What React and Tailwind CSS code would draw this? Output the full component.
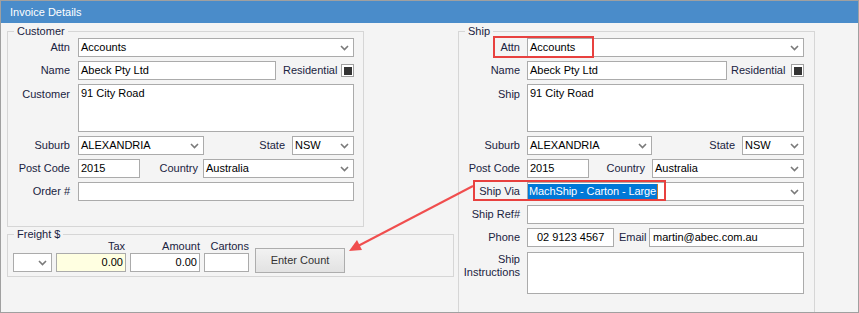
import React from "react"

const font = { fontFamily: '"Liberation Sans", Arial, sans-serif' }

function Chevron() {
  return (
    <svg width="9" height="6" viewBox="0 0 9 6" className="shrink-0">
      <path d="M1 1 L4.5 4.5 L8 1" stroke="#7a7a7a" strokeWidth="1.6" fill="none" />
    </svg>
  )
}

function Select({ className = "", children }) {
  return (
    <div className={"h-[19px] border border-[#ababab] bg-white flex items-center justify-between pl-[2px] pr-[4px] text-black " + className}>
      <span className="whitespace-nowrap">{children}</span>
      <Chevron />
    </div>
  )
}

function Input({ className = "", bg = "bg-white", children }) {
  return (
    <div className={"h-[19px] border border-[#ababab] flex items-center pl-[2px] text-black whitespace-nowrap " + bg + " " + className}>
      {children}
    </div>
  )
}

function Area({ className = "", children }) {
  return (
    <div className={"border border-[#ababab] bg-white pl-[2px] pt-[1px] text-black leading-[14px] " + className}>
      {children}
    </div>
  )
}

function Label({ children, className = "w-[62px]" }) {
  return <div className={"text-right text-[#1a2341] shrink-0 whitespace-nowrap " + className}>{children}</div>
}

function Row({ label, lw = "w-[62px]", gap = "ml-[8px]", children }) {
  return (
    <div className="flex items-center h-[19px]">
      <Label className={lw}>{label}</Label>
      <div className={gap + " flex items-center flex-1 min-w-0 h-full"}>{children}</div>
    </div>
  )
}

function Check() {
  return (
    <div className="w-[13px] h-[13px] border border-[#a0a0a0] bg-white flex items-center justify-center shrink-0">
      <div className="w-[8px] h-[8px] bg-[#333333]" />
    </div>
  )
}

function Group({ title, className = "", children }) {
  return (
    <fieldset className={"border border-[#d6d6d6] " + className}>
      <legend className="ml-[6px] px-[3px] leading-[13px] text-[#1a2341]">{title}</legend>
      {children}
    </fieldset>
  )
}

export default function App() {
  const sl = "w-[61px]"
  const sg = "ml-[7px]"
  return (
    <div className="relative w-[859px] h-[313px] text-[11px]" style={font}>
      <div className="w-full h-full border border-[#a0a0a0] bg-[#f4f4f4] overflow-hidden">
        <div className="h-[22px] bg-[#4a8cca] text-white flex items-center pl-[9px] leading-none">Invoice Details</div>

        <div className="flex items-start pl-[6px] pt-[2px]">
          <div className="w-[447px] shrink-0">
            <Group title="Customer" className="w-[357px] h-[202px] pr-[9px]">
              <div className="flex flex-col gap-[4px]">
                <Row label="Attn"><Select className="flex-1">Accounts</Select></Row>
                <Row label="Name">
                  <Input className="w-[198px]">Abeck Pty Ltd</Input>
                  <span className="ml-[7px] text-[#1a2341]">Residential</span>
                  <div className="ml-auto"><Check /></div>
                </Row>
                <div className="flex items-start h-[48px]">
                  <Label className="w-[62px] pt-[2px]">Customer</Label>
                  <Area className="ml-[8px] flex-1 h-[48px]">91 City Road</Area>
                </div>
                <Row label="Suburb">
                  <Select className="w-[126px]">ALEXANDRIA</Select>
                  <span className="ml-auto mr-[7px] text-[#1a2341]">State</span>
                  <Select className="w-[62px]">NSW</Select>
                </Row>
                <Row label="Post Code">
                  <Input className="w-[62px]">2015</Input>
                  <span className="ml-auto mr-[5px] text-[#1a2341]">Country</span>
                  <Select className="w-[151px]">Australia</Select>
                </Row>
                <Row label="Order #"><Input className="flex-1" /></Row>
              </div>
            </Group>

            <Group title="Freight $" className="w-[447px] h-[49px] mt-[1px]">
              <div className="flex items-end pl-[5px] -mt-[1px]">
                <Select className="w-[39px]" />
                <div className="ml-[4px] w-[70px] flex flex-col">
                  <span className="text-right text-[#1a2341] leading-[12px] mb-[1px] pr-[1px]">Tax</span>
                  <Input bg="bg-[#ffffe1]" className="justify-end pr-[2px]">0.00</Input>
                </div>
                <div className="ml-[4px] w-[70px] flex flex-col">
                  <span className="text-right text-[#1a2341] leading-[12px] mb-[1px]">Amount</span>
                  <Input className="justify-end pr-[2px]">0.00</Input>
                </div>
                <div className="ml-[4px] w-[45px] flex flex-col">
                  <span className="text-right text-[#1a2341] leading-[12px] mb-[1px]">Cartons</span>
                  <Input />
                </div>
                <button className="ml-[6px] mb-[-1px] w-[90px] h-[25px] border border-[#adadad] bg-gradient-to-b from-[#f2f2f2] to-[#e2e2e2] text-[#333333] text-[11px]">
                  Enter Count
                </button>
              </div>
            </Group>
          </div>

          <Group title="Ship" className="ml-[4px] w-[357px] h-[300px] pr-[10px] shrink-0">
            <div className="flex flex-col gap-[4px]">
              <Row label="Attn" lw={sl} gap={sg}><Select className="flex-1">Accounts</Select></Row>
              <Row label="Name" lw={sl} gap={sg}>
                <Input className="w-[200px]">Abeck Pty Ltd</Input>
                <span className="ml-[4px] text-[#1a2341]">Residential</span>
                <div className="ml-auto"><Check /></div>
              </Row>
              <div className="flex items-start h-[48px]">
                <Label className="w-[61px] pt-[2px]">Ship</Label>
                <Area className="ml-[7px] flex-1 h-[48px]">91 City Road</Area>
              </div>
              <Row label="Suburb" lw={sl} gap={sg}>
                <Select className="w-[125px]">ALEXANDRIA</Select>
                <span className="ml-auto mr-[7px] text-[#1a2341]">State</span>
                <Select className="w-[62px]">NSW</Select>
              </Row>
              <Row label="Post Code" lw={sl} gap={sg}>
                <Input className="w-[62px]">2015</Input>
                <span className="ml-auto mr-[7px] text-[#1a2341]">Country</span>
                <Select className="w-[152px]">Australia</Select>
              </Row>
              <Row label="Ship Via" lw={sl} gap={sg}>
                <div className="flex-1 h-[19px] border border-[#ababab] bg-white flex items-center justify-between pr-[4px]">
                  <span className="flex items-center">
                    <span className="bg-[#0078d7] text-white h-[15px] leading-[15px] px-[1px] whitespace-nowrap tracking-[-0.1px]">MachShip - Carton - Large</span>
                    <span className="w-px h-[15px] bg-[#c47a2c]" />
                  </span>
                  <Chevron />
                </div>
              </Row>
              <Row label="Ship Ref#" lw={sl} gap={sg}><Input className="flex-1" /></Row>
              <Row label="Phone" lw={sl} gap={sg}>
                <Input className="w-[87px] pl-[9px]">02 9123 4567</Input>
                <span className="ml-[5px] text-[#1a2341]">Email</span>
                <Input className="ml-auto w-[155px] pl-[3px]">martin@abec.com.au</Input>
              </Row>
              <div className="flex items-start mt-[1px]">
                <Label className="w-[61px] leading-[13px] pt-[1px]">Ship<br />Instructions</Label>
                <Area className="ml-[7px] flex-1 h-[42px]" />
              </div>
            </div>
          </Group>
        </div>
      </div>

      <div className="absolute left-[493px] top-[36px] w-[101px] h-[22px] border-2 border-[#e8413f] pointer-events-none" />
      <div className="absolute left-[473px] top-[180px] w-[193px] h-[21px] border-2 border-[#e8413f] pointer-events-none" />
      <svg className="absolute left-0 top-0 pointer-events-none" width="859" height="313" viewBox="0 0 859 313">
        <line x1="473" y1="186" x2="358" y2="246" stroke="#f04e4e" strokeWidth="2" />
        <polygon points="349,251 357,240 362,250" fill="#f04e4e" />
      </svg>
    </div>
  )
}
